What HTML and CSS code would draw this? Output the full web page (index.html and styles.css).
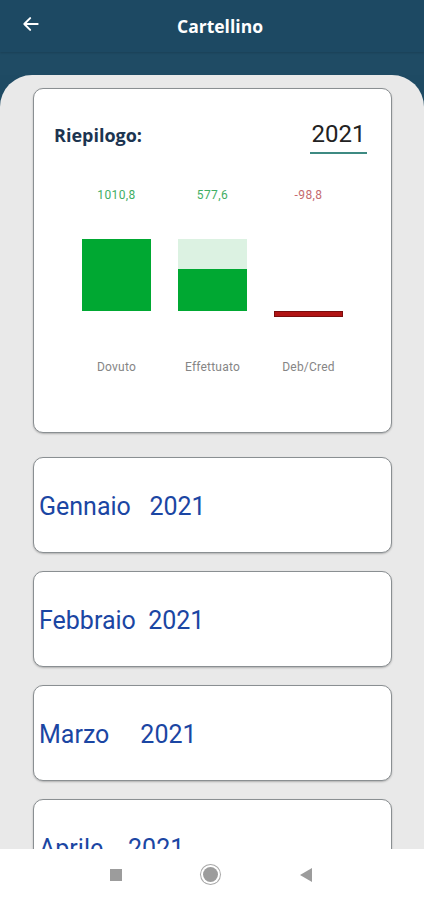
FILE: index.html
```html
<!DOCTYPE html>
<html lang="it">
<head>
    <meta charset="UTF-8">
    <meta name="viewport" content="width=device-width, initial-scale=1.0">
    <title>Cartellino</title>
    <link rel="stylesheet" href="styles.css">
</head>
<body>
    <!-- Top bar -->
    <header class="topbar">
        <svg class="back" width="20" height="20" viewBox="0 0 24 24">
            <path d="M20 12H5M11 5l-7 7 7 7" fill="none" stroke="#fff" stroke-width="2.4" stroke-linecap="round" stroke-linejoin="round"/>
        </svg>
        <h1>Cartellino</h1>
    </header>
    <div class="band"></div>

    <main class="panel">
        <!-- Summary card -->
        <section class="card summary">
            <div class="summary-head">
                <span class="summary-title">Riepilogo:</span>
                <span class="year">2021</span>
            </div>
            <div class="chart">
                <div class="col">
                    <span class="val pos">1010,8</span>
                    <div class="plot">
                        <div class="bar full" style="height: 72px"></div>
                    </div>
                    <span class="lbl">Dovuto</span>
                </div>
                <div class="col">
                    <span class="val pos">577,6</span>
                    <div class="plot">
                        <div class="bar stack">
                            <div class="bar-rest" style="height: 30px"></div>
                            <div class="bar-done" style="height: 42px"></div>
                        </div>
                    </div>
                    <span class="lbl">Effettuato</span>
                </div>
                <div class="col">
                    <span class="val neg">-98,8</span>
                    <div class="plot">
                        <div class="bar debit"></div>
                    </div>
                    <span class="lbl">Deb/Cred</span>
                </div>
            </div>
        </section>

        <!-- Months -->
        <section class="card month">Gennaio   2021</section>
        <section class="card month">Febbraio  2021</section>
        <section class="card month">Marzo     2021</section>
        <section class="card month">Aprile    2021</section>
    </main>

    <!-- Android nav bar -->
    <nav class="navbar">
        <span class="nav-item"><span class="nav-square"></span></span>
        <span class="nav-item"><span class="nav-circle"></span></span>
        <span class="nav-item"><span class="nav-back"></span></span>
    </nav>
</body>
</html>
```

FILE: styles.css
```css
body {
    margin: 0;
    padding: 0;
    font-family: Roboto, "Noto Sans", sans-serif;
    background-color: #1e4a63;
    height: 900px;
    overflow: hidden;
}
.topbar {
    height: 52px;
    display: flex;
    align-items: center;
    justify-content: center;
    background-color: #1d4963;
    box-shadow: 0 1px 2px rgba(0, 0, 0, 0.15);
    position: relative;
}
.back {
    position: absolute;
    left: 21px;
    top: 14px;
}
.topbar h1 {
    margin: 0;
    color: #fff;
    font-family: "Open Sans", sans-serif;
    font-size: 17.5px;
    font-weight: bold;
    padding-left: 16px;
}
.band {
    height: 23px;
    background-color: #1f4b64;
}
.panel {
    background-color: #e9e9e9;
    border-radius: 32px 32px 0 0;
    padding: 13px 32px 0 33px;
    display: flex;
    flex-direction: column;
    gap: 18px;
}
.card {
    background: #fff;
    border: 1px solid #8a8f92;
    border-radius: 10px;
    box-shadow: 0 1px 2px rgba(0, 0, 0, 0.25);
}
.summary {
    height: 345px;
    margin-bottom: 6px;
    padding: 0 20px;
    box-sizing: border-box;
}
.summary-head {
    display: flex;
    justify-content: space-between;
    align-items: flex-end;
    padding-top: 31px;
}
.summary-title {
    color: #1c3450;
    font-family: "Open Sans", sans-serif;
    font-size: 18px;
    font-weight: bold;
    padding-bottom: 7px;
}
.year {
    font-size: 24px;
    color: #222;
    width: 57px;
    text-align: center;
    border-bottom: 2px solid #3d8a82;
    padding-bottom: 4px;
    margin-right: 4px;
}
.chart {
    display: flex;
    justify-content: center;
    gap: 27px;
    margin-top: 34px;
}
.col {
    width: 69px;
    display: flex;
    flex-direction: column;
    align-items: center;
}
.val {
    font-size: 12px;
    letter-spacing: 0.4px;
    height: 14px;
}
.pos {
    color: #3fae64;
}
.neg {
    color: #c56b70;
}
.plot {
    width: 69px;
    height: 72px;
    margin-top: 37px;
    display: flex;
    align-items: flex-end;
}
.bar {
    width: 69px;
}
.full {
    background-color: #00a832;
}
.stack {
    display: flex;
    flex-direction: column;
}
.bar-rest {
    background-color: #dcf2e2;
}
.bar-done {
    background-color: #00a832;
}
.debit {
    height: 6px;
    background-color: #b11414;
    border: 1px solid #7a0d0d;
    box-sizing: border-box;
    margin-bottom: -6px;
}
.lbl {
    font-size: 12px;
    letter-spacing: 0.2px;
    color: #858585;
    margin-top: 49px;
}
.month {
    height: 96px;
    box-sizing: border-box;
    display: flex;
    align-items: center;
    padding-left: 5px;
    padding-top: 2px;
    color: #1b46a3;
    font-size: 25px;
    white-space: pre;
    flex-shrink: 0;
}
.navbar {
    position: absolute;
    left: 0;
    right: 0;
    top: 849px;
    height: 51px;
    background: #fff;
    display: flex;
    justify-content: center;
    align-items: center;
    gap: 75px;
    padding-right: 3px;
}
.nav-item {
    width: 20px;
    display: flex;
    justify-content: center;
}
.nav-square {
    width: 12px;
    height: 12px;
    background-color: #9c9c9c;
}
.nav-circle {
    width: 15px;
    height: 15px;
    border-radius: 50%;
    background-color: #9c9c9c;
    box-shadow: 0 0 0 2px #fff, 0 0 0 3px #a8a8a8;
}
.nav-back {
    width: 0;
    height: 0;
    border-top: 7px solid transparent;
    border-bottom: 7px solid transparent;
    border-right: 12px solid #9c9c9c;
}
```
